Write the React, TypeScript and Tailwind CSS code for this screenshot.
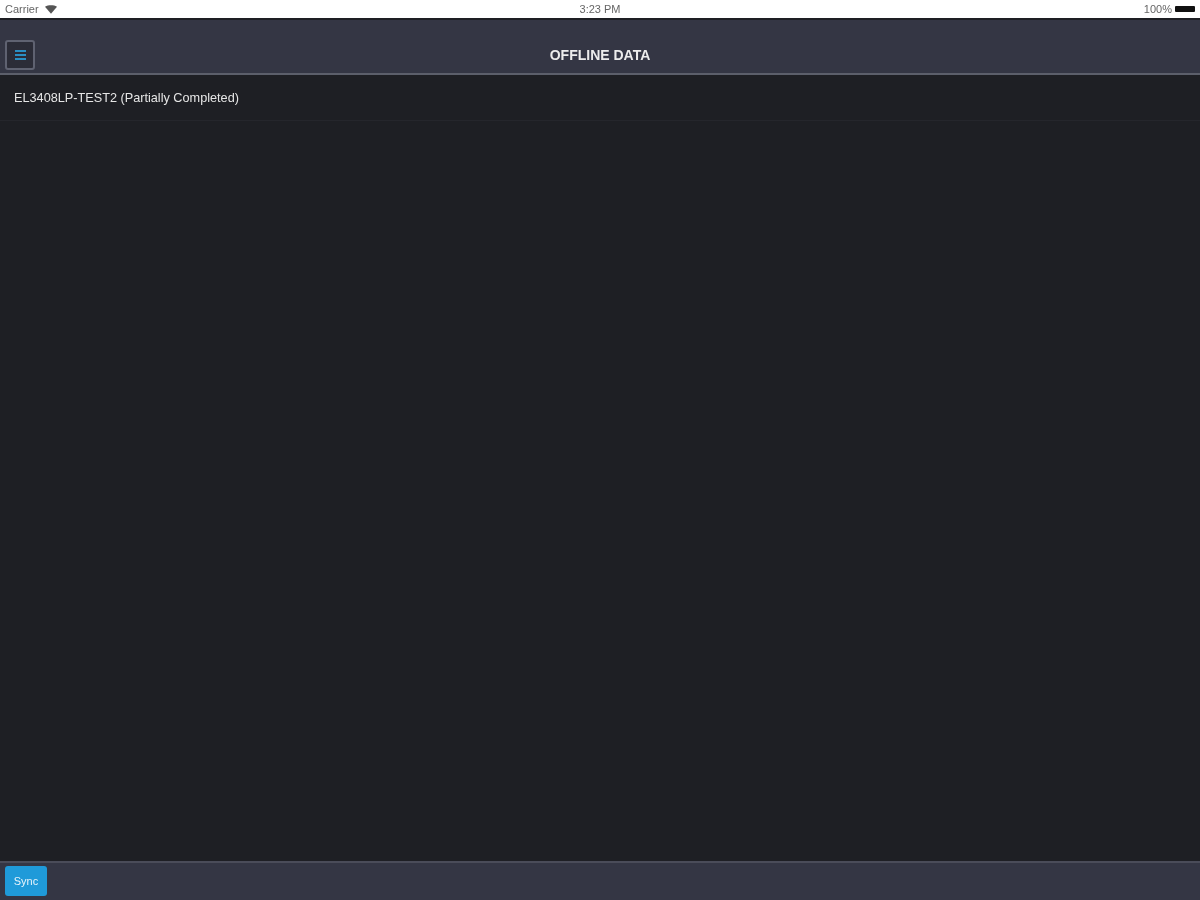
import React from 'react';

const font = "font-['Liberation_Sans',Arial,sans-serif]";

const StatusBar = () => (
  <div className="flex h-[18px] items-center justify-between bg-white pl-[5px] pr-[5px] text-[11px] text-[#666]">
    <div className="flex flex-1 items-center gap-[6px]">
      <span className="blur-[0.5px]">Carrier</span>
      <svg width="12" height="9" viewBox="0 0 13 9" className="blur-[0.4px]">
        <path d="M0 1.6C3.8-.5 9.2-.5 13 1.6L6.5 9z" fill="#555" />
      </svg>
    </div>
    <span className="blur-[0.5px]">3:23 PM</span>
    <div className="flex flex-1 items-center justify-end gap-[3px]">
      <span className="blur-[0.5px]">100%</span>
      <div className="h-[6px] w-[20px] rounded-[1px] bg-[#111] blur-[0.4px]" />
    </div>
  </div>
);

const App: React.FC = () => {
  return (
    <div className={`flex h-[900px] w-[1200px] flex-col overflow-hidden bg-[#1e1f24] ${font}`}>
      <StatusBar />

      <header className="relative flex h-[57px] items-center justify-center border-t-2 border-b-2 border-t-[#1e1f24] border-b-[#5c5f6b] bg-[#343644]">
        <button className="absolute left-[5px] top-[20px] flex h-[30px] w-[30px] items-center justify-center rounded-[3px] border-2 border-[#5f6271] bg-[#2b2c37]">
          <span className="flex w-[11px] flex-col gap-[2px] blur-[0.4px]">
            <span className="h-[2px] bg-[#2a8fc4]" />
            <span className="h-[2px] bg-[#2a8fc4]" />
            <span className="h-[2px] bg-[#2a8fc4]" />
          </span>
        </button>
        <h1 className="mt-[18px] text-[14px] font-bold text-[#ececec] blur-[0.5px]">OFFLINE DATA</h1>
      </header>

      <main className="flex-1">
        <div className="flex h-[46px] items-center border-b border-[#25262c] pl-[14px] pt-[2px] text-[12.7px] text-[#e6e6e6]">
          <span className="blur-[0.5px]">EL3408LP-TEST2 (Partially Completed)</span>
        </div>
      </main>

      <footer className="flex h-[39px] items-center border-t-2 border-[#4a4c59] bg-[#343644] pb-[2px] pl-[5px]">
        <button className="flex h-[30px] w-[42px] items-center justify-center rounded-[3px] bg-[#1f9ad9] pt-[1px] text-[11px] text-[#e8f4fb]">
          <span className="blur-[0.5px]">Sync</span>
        </button>
      </footer>
    </div>
  );
};

export default App;
